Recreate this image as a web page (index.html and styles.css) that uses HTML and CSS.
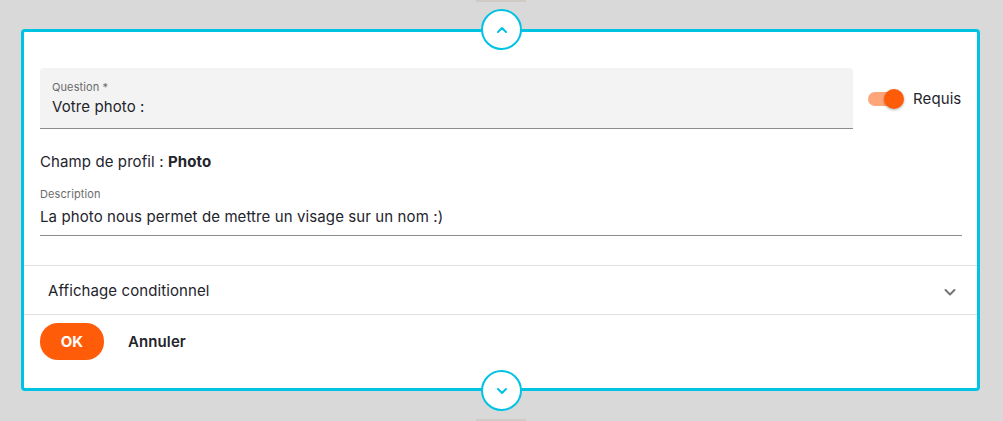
FILE: index.html
```html
<!DOCTYPE html>
<html lang="fr">
<head>
<meta charset="UTF-8">
<title>Question - Photo</title>
<link rel="stylesheet" href="styles.css">
</head>
<body>
<div class="tab tab-top"></div>
<div class="card">
  <button class="move-btn move-up" type="button">
    <svg width="14" height="14" viewBox="0 0 14 14"><path d="M3 9 L7 5 L11 9" fill="none" stroke="#00c2e3" stroke-width="2" stroke-linecap="round" stroke-linejoin="round"/></svg>
  </button>

  <div class="card-body">
    <div class="row">
      <div class="field filled">
        <label class="field-label">Question *</label>
        <div class="field-value">Votre photo :</div>
      </div>
      <div class="switch">
        <span class="switch-track"><span class="switch-thumb"></span></span>
        <span class="switch-text">Requis</span>
      </div>
    </div>

    <p class="profile">Champ de profil : <strong>Photo</strong></p>

    <div class="field plain">
      <label class="field-label">Description</label>
      <div class="field-value">La photo nous permet de mettre un visage sur un nom :)</div>
    </div>
  </div>

  <div class="accordion">
    <span>Affichage conditionnel</span>
    <svg width="14" height="14" viewBox="0 0 14 14"><path d="M2.5 5 L7 9.5 L11.5 5" fill="none" stroke="#757575" stroke-width="2" stroke-linecap="round" stroke-linejoin="round"/></svg>
  </div>

  <div class="actions">
    <button class="btn-ok" type="button">OK</button>
    <button class="btn-cancel" type="button">Annuler</button>
  </div>

  <button class="move-btn move-down" type="button">
    <svg width="14" height="14" viewBox="0 0 14 14"><path d="M3 5 L7 9 L11 5" fill="none" stroke="#00c2e3" stroke-width="2" stroke-linecap="round" stroke-linejoin="round"/></svg>
  </button>
</div>
<div class="tab tab-bottom"></div>
</body>
</html>
```

FILE: styles.css
```css
body {
    margin: 0;
    padding: 0;
    background-color: #d9d9d9;
    font-family: "Inter", "Lato", sans-serif;
    letter-spacing: 0.1px;
    color: #24242c;
    height: 421px;
    overflow: hidden;
    position: relative;
}

/* little grey tabs of the neighbour cards */
.tab {
    position: absolute;
    left: 476px;
    width: 50px;
    height: 3px;
    background-color: #cfcac4;
}

.tab-top {
    top: -1px;
}

.tab-bottom {
    bottom: -1px;
}

.card {
    position: relative;
    box-sizing: border-box;
    width: 959px;
    height: 362px;
    margin: 29px 0 0 21px;
    background-color: #fff;
    border: 3px solid #00c2e3;
    border-radius: 4px;
}

.move-btn {
    position: absolute;
    left: 457px;
    width: 41px;
    height: 41px;
    padding: 0;
    border: 2px solid #00c2e3;
    border-radius: 50%;
    background-color: #fff;
    display: flex;
    align-items: center;
    justify-content: center;
    cursor: pointer;
}

.move-up {
    top: -23px;
}

.move-down {
    bottom: -23px;
}

.card-body {
    padding: 36px 15px 29px 16px;
    border-bottom: 1px solid #e0e0e0;
}

.row {
    display: flex;
    align-items: center;
}

.field {
    box-sizing: border-box;
    border-bottom: 1px solid #8c8c8c;
}

.field.filled {
    flex: 0 0 813px;
    height: 61px;
    padding: 11px 12px 0;
    background-color: #f3f3f3;
    border-radius: 4px 4px 0 0;
}

.field.filled .field-value {
    margin-top: 1px;
}

.field.plain {
    height: 50px;
}

.field-label {
    display: block;
    font-size: 11px;
    color: #6b6b6b;
    line-height: 16px;
}

.field-value {
    font-size: 15px;
    line-height: 22px;
    margin-top: 4px;
}

.switch {
    display: flex;
    align-items: center;
    margin-left: 15px;
}

.switch-track {
    position: relative;
    width: 34px;
    height: 14px;
    border-radius: 7px;
    background-color: #ffa57a;
}

.switch-thumb {
    position: absolute;
    right: -2px;
    top: -3px;
    width: 20px;
    height: 20px;
    border-radius: 50%;
    background-color: #ff5c0a;
    box-shadow: 0 1px 3px rgba(0, 0, 0, 0.3);
}

.switch-text {
    margin-left: 11px;
    font-size: 15px;
}

.profile {
    margin: 23px 0 14px;
    font-size: 15px;
    line-height: 20px;
}

.profile strong {
    font-weight: 700;
}

.accordion {
    display: flex;
    align-items: center;
    justify-content: space-between;
    height: 48px;
    padding: 0 20px 0 24px;
    font-size: 15px;
    border-bottom: 1px solid #e0e0e0;
}

.accordion svg {
    margin-top: 4px;
}

.actions {
    display: flex;
    align-items: center;
    padding: 8px 16px;
}

.btn-ok {
    width: 64px;
    height: 37px;
    border: none;
    border-radius: 18px;
    background-color: #ff5c0a;
    color: #fff;
    font-family: inherit;
    font-size: 15px;
    font-weight: 700;
    cursor: pointer;
}

.btn-cancel {
    margin-left: 12px;
    padding: 8px 12px;
    border: none;
    background: none;
    color: #24242c;
    font-family: inherit;
    font-size: 15px;
    font-weight: 600;
    letter-spacing: 0.1px;
    cursor: pointer;
}
```
